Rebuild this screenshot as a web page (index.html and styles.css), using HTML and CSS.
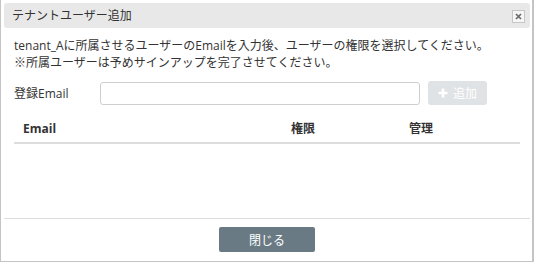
FILE: index.html
```html
<!DOCTYPE html>
<html lang="ja">
<head>
<meta charset="utf-8">
<title>テナントユーザー追加</title>
<link rel="stylesheet" href="styles.css">
</head>
<body>
<div class="dialog">
  <div class="titlebar">
    <span class="title">テナントユーザー追加</span>
    <button class="close-x" aria-label="close">
      <svg width="7" height="7" viewBox="0 0 7 7"><path d="M1 1L6 6M6 1L1 6" stroke="#6a6a6a" stroke-width="1.7" fill="none"/></svg>
    </button>
  </div>
  <div class="content">
    <p class="desc">tenant_Aに所属させるユーザーのEmailを入力後、ユーザーの権限を選択してください。<br>※所属ユーザーは予めサインアップを完了させてください。</p>
    <div class="form-row">
      <label class="label">登録Email</label>
      <input class="email-input" type="text">
      <button class="add-btn" disabled>
        <svg width="10" height="10" viewBox="0 0 10 10"><path d="M5 0.5V9.5M0.5 5H9.5" stroke="#fff" stroke-width="2.6" fill="none"/></svg>
        <span>追加</span>
      </button>
    </div>
    <div class="table-head">
      <div class="col col-email">Email</div>
      <div class="col col-role">権限</div>
      <div class="col col-manage">管理</div>
    </div>
  </div>
  <div class="footer">
    <button class="close-btn">閉じる</button>
  </div>
</div>
</body>
</html>
```

FILE: styles.css
```css
* { box-sizing: border-box; }
html, body { margin: 0; padding: 0; background: #fff; }
body {
  font-family: "Open Sans", "Noto Sans CJK JP", sans-serif;
  font-size: 12px;
  color: #333;
}
.dialog {
  width: 534px;
  height: 262px;
  border-left: 1px solid #c4c4c4;
  border-right: 2px solid #c4c4c4;
  border-bottom: 1px solid #c4c4c4;
  padding: 3px 2px 0 3px;
  display: flex;
  flex-direction: column;
  background: #fff;
}
.titlebar {
  height: 25px;
  background: #e8e8e8;
  border-radius: 3px;
  display: flex;
  align-items: center;
  justify-content: space-between;
  padding: 0 5px 0 8px;
}
.title { font-size: 12px; line-height: 17px; color: #333; }
.close-x {
  width: 13px;
  height: 13px;
  padding: 0;
  border: 1px solid #c6c6c6;
  background: #f6f6f6;
  display: flex;
  align-items: center;
  justify-content: center;
  margin-top: 1px;
}
.content {
  flex: 1;
  padding: 0 10px;
}
.desc {
  margin: 9px 0 0;
  line-height: 17px;
}
.form-row {
  display: flex;
  align-items: center;
  margin-top: 10px;
  height: 24px;
}
.label { width: 86px; line-height: 17px; }
.email-input {
  width: 320px;
  height: 23px;
  border: 1px solid #cfcfcf;
  border-radius: 3px;
  margin: 0;
  padding: 0 6px;
}
.add-btn {
  margin-left: 8px;
  width: 59px;
  height: 24px;
  border: none;
  border-radius: 3px;
  background: #dfe3e6;
  color: #fff;
  font-family: inherit;
  font-size: 12px;
  display: flex;
  align-items: center;
  justify-content: center;
  gap: 5px;
  padding: 0;
}
.table-head {
  display: flex;
  margin-top: 8px;
  border-bottom: 2px solid #dddddd;
  font-weight: bold;
  line-height: 17px;
}
.col { padding: 7px 9px 5px; }
.col-email { width: 268px; }
.col-role { width: 118px; }
.col-manage { flex: 1; }
.footer {
  border-top: 1px solid #dddddd;
  padding: 8px 0 9px;
  display: flex;
  justify-content: center;
}
.close-btn {
  width: 96px;
  height: 25px;
  border: none;
  border-radius: 2px;
  background: #697a84;
  color: #fff;
  font-family: inherit;
  font-size: 12px;
  padding: 0;
}
```
